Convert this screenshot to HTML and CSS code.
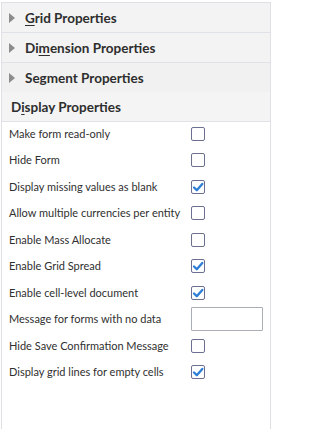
FILE: index.html
```html
<!DOCTYPE html>
<html>
<head>
<meta charset="utf-8">
<meta name="viewport" content="width=272">
<link rel="stylesheet" href="styles.css">
</head>
<body>
<div class="panel">
  <div class="hdr collapsed"><span class="tri"></span><span class="ttl"><u>G</u>rid Properties</span></div>
  <div class="hdr collapsed"><span class="tri"></span><span class="ttl">Di<u>m</u>ension Properties</span></div>
  <div class="hdr collapsed seg"><span class="tri"></span><span class="ttl">Segment Properties</span></div>
  <div class="hdr open"><span class="ttl">D<u>i</u>splay Properties</span></div>
  <div class="content">
    <div class="row"><span class="lbl">Make form read-only</span><span class="cb"></span></div>
    <div class="row"><span class="lbl">Hide Form</span><span class="cb"></span></div>
    <div class="row"><span class="lbl">Display missing values as blank</span><span class="cb on"><svg viewBox="0 0 12 12" width="12" height="12"><path d="M2 6.5 L4.8 9.2 L10.3 2.9" fill="none" stroke="#2d7fd6" stroke-width="2.3" stroke-linecap="round" stroke-linejoin="round"/></svg></span></div>
    <div class="row"><span class="lbl">Allow multiple currencies per entity</span><span class="cb"></span></div>
    <div class="row"><span class="lbl">Enable Mass Allocate</span><span class="cb"></span></div>
    <div class="row"><span class="lbl">Enable Grid Spread</span><span class="cb on"><svg viewBox="0 0 12 12" width="12" height="12"><path d="M2 6.5 L4.8 9.2 L10.3 2.9" fill="none" stroke="#2d7fd6" stroke-width="2.3" stroke-linecap="round" stroke-linejoin="round"/></svg></span></div>
    <div class="row"><span class="lbl">Enable cell-level document</span><span class="cb on"><svg viewBox="0 0 12 12" width="12" height="12"><path d="M2 6.5 L4.8 9.2 L10.3 2.9" fill="none" stroke="#2d7fd6" stroke-width="2.3" stroke-linecap="round" stroke-linejoin="round"/></svg></span></div>
    <div class="row"><span class="lbl">Message for forms with no data</span><span class="txt"></span></div>
    <div class="row"><span class="lbl">Hide Save Confirmation Message</span><span class="cb"></span></div>
    <div class="row"><span class="lbl">Display grid lines for empty cells</span><span class="cb on"><svg viewBox="0 0 12 12" width="12" height="12"><path d="M2 6.5 L4.8 9.2 L10.3 2.9" fill="none" stroke="#2d7fd6" stroke-width="2.3" stroke-linecap="round" stroke-linejoin="round"/></svg></span></div>
  </div>
</div>
</body>
</html>
```
FILE: styles.css
```css
html, body {
  margin: 0;
  padding: 0;
  background: #ffffff;
}
html {
  width: 272px;
  overflow: hidden;
}
body {
  font-family: Lato, "Noto Sans", sans-serif;
  color: #333333;
  padding: 2px 0 0 1px;
  width: 271px;
}
.panel {
  width: 268px;
  height: 440px;
  border: 1px solid #dde1e6;
  border-bottom: none;
  box-sizing: content-box;
  background: #ffffff;
}
.hdr {
  height: 29px;
  display: flex;
  align-items: center;
  background: #f3f3f3;
  border-bottom: 1px solid #dfe3e8;
  font-size: 13.5px;
  font-weight: bold;
  color: #2e2e2e;
}
.hdr.seg {
  border-bottom: none;
  background: #f1f1f1;
}
.hdr.open {
  background: #f4f4f4;
  padding-left: 9px;
}
.tri {
  width: 0;
  height: 0;
  border-left: 6px solid #8c8c8c;
  border-top: 5px solid transparent;
  border-bottom: 5px solid transparent;
  margin-left: 7px;
  margin-right: 10px;
}
.hdr u {
  text-decoration-thickness: 1px;
  text-underline-offset: 2px;
}
.content {
  padding-left: 7px;
}
.row {
  height: 26.44px;
  display: grid;
  grid-template-columns: 182px auto;
  align-items: start;
  font-size: 11px;
}
.lbl {
  margin-top: 5px;
  line-height: 14px;
  white-space: nowrap;
  color: #303030;
}
.cb {
  margin-top: 5px;
  width: 14px;
  height: 14px;
  box-sizing: border-box;
  border: 1px solid #6c7090;
  border-radius: 2px;
  background: #fff;
  display: flex;
  align-items: center;
  justify-content: center;
}
.txt {
  width: 72px;
  height: 24px;
  box-sizing: border-box;
  border: 1px solid #a9adb5;
  border-radius: 1px;
  background: #fff;
}
```
